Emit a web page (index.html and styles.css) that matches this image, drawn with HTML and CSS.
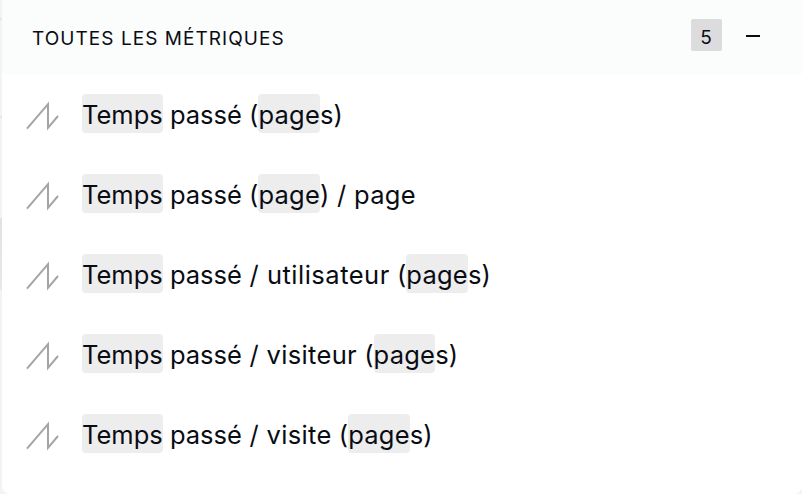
FILE: index.html
```html
<!DOCTYPE html>
<html lang="fr">
  <head>
    <meta charset="UTF-8" />
    <meta name="viewport" content="width=device-width, initial-scale=1.0" />
    <title>Toutes les métriques</title>
    <link rel="stylesheet" href="styles.css">
  </head>
  <body>
    <svg class="symbols" aria-hidden="true">
      <symbol id="metric" viewBox="0 0 34 32">
        <path d="M1 28.6 L22 4.2 V27.8 L32 16" />
      </symbol>
    </svg>

    <div class="panel">
      <div class="header">
        <h1>Toutes les métriques</h1>
        <span class="count">5</span>
        <button class="toggle" aria-label="Réduire"></button>
      </div>

      <ul class="metrics">
        <li>
          <svg class="icon"><use href="#metric" /></svg>
          <span class="label"><mark>Temps</mark> passé (<mark class="page">page</mark>s)</span>
        </li>
        <li>
          <svg class="icon"><use href="#metric" /></svg>
          <span class="label"><mark>Temps</mark> passé (<mark class="page">page</mark>)<span class="unit"> / page</span></span>
        </li>
        <li>
          <svg class="icon"><use href="#metric" /></svg>
          <span class="label"><mark>Temps</mark> passé<span class="unit wide"> / utilisateur</span> (<mark class="page">page</mark>s)</span>
        </li>
        <li>
          <svg class="icon"><use href="#metric" /></svg>
          <span class="label"><mark>Temps</mark> passé<span class="unit"> / visiteur</span> (<mark class="page">page</mark>s)</span>
        </li>
        <li>
          <svg class="icon"><use href="#metric" /></svg>
          <span class="label"><mark>Temps</mark> passé<span class="unit"> / visite</span> (<mark class="page">page</mark>s)</span>
        </li>
      </ul>
    </div>
  </body>
</html>
```

FILE: styles.css
```css
* {
  box-sizing: border-box;
  margin: 0;
  padding: 0;
}

body {
  font-family: Inter, "Liberation Sans", sans-serif;
  color: #0a0c14;
  height: 494px;
  padding-left: 2px;
  overflow: hidden;
  background:
    linear-gradient(#e6e6e7, #e6e6e7) 0 18px / 2px 2px no-repeat,
    linear-gradient(#e6e6e7, #e6e6e7) 0 116px / 2px 2px no-repeat,
    linear-gradient(#e2e2e3, #e8e8e8) 0 218px / 2px 72px no-repeat #f3f3f3;
}

.symbols {
  display: none;
}

.panel {
  height: 494px;
  background: #fff;
  border-radius: 0 0 8px 8px;
}

.header {
  display: flex;
  align-items: center;
  height: 74px;
  padding: 0 42px 4px 30px;
  background: #fafdfc;
}

.header h1 {
  flex: 1;
  font-size: 19px;
  font-weight: 400;
  letter-spacing: 1.05px;
  line-height: 24px;
  padding-top: 7px;
  text-transform: uppercase;
}

.count {
  width: 31px;
  height: 32px;
  margin-right: 24px;
  padding: 3px 1px 0 0;
  border-radius: 2px;
  background: #dcdcde;
  font-size: 19px;
  line-height: 32px;
  text-align: center;
}

.toggle {
  width: 14px;
  height: 2px;
  margin-top: 2px;
  border: none;
  background: #0a0c14;
}

.metrics {
  list-style: none;
}

.metrics li {
  display: flex;
  align-items: center;
  height: 80px;
  padding-left: 24px;
}

.icon {
  width: 34px;
  height: 32px;
  margin-right: 22px;
  margin-top: 4px;
  fill: none;
  stroke: #a3a4a6;
  stroke-width: 2;
}

.label {
  font-size: 25.5px;
  line-height: 39px;
  white-space: pre;
}

/* the highlight sits slightly above the middle of the line */
.label mark {
  display: inline-block;
  height: 39px;
  line-height: 41px;
  border-radius: 4px;
  background: #ededed;
  color: inherit;
}

.label .page {
  letter-spacing: 0.25px;
}

.unit {
  letter-spacing: 0.35px;
}

.unit.wide {
  letter-spacing: 0.5px;
}
```
